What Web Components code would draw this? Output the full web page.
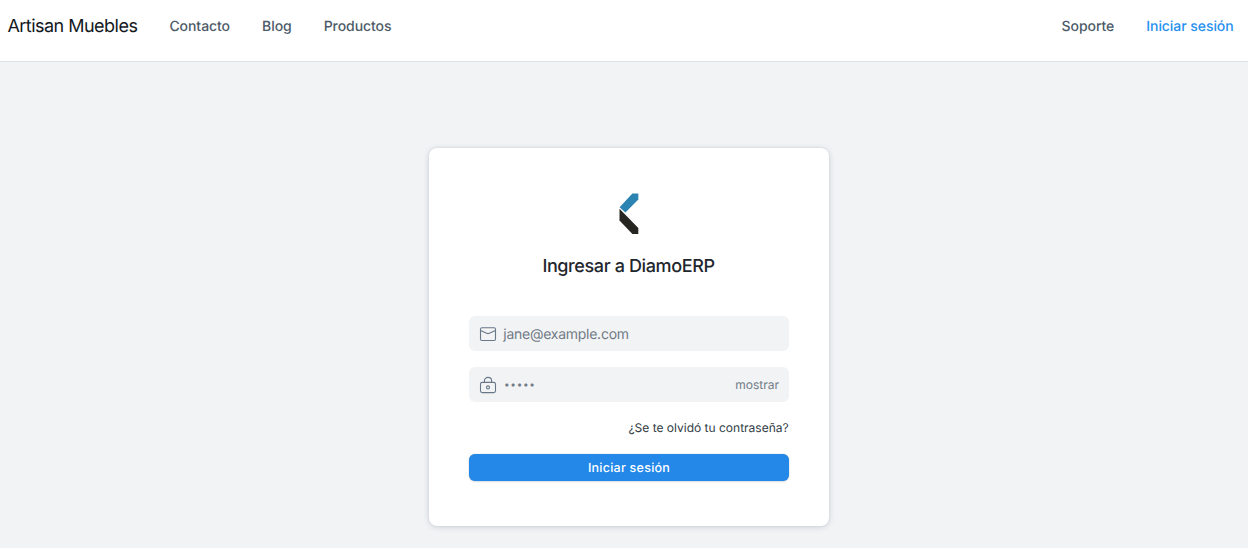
<!DOCTYPE html>
<html lang="es">
<head>
<meta charset="utf-8">
<title>Iniciar sesión</title>
<style>
html,body{margin:0;height:100%}
body{background:#f2f3f5;font-family:Inter,"Liberation Sans",sans-serif;color:#1f272e;overflow:hidden;text-rendering:geometricPrecision}
</style>
</head>
<body>
<site-navbar brand="Artisan Muebles">
  <nav-link>Contacto</nav-link><nav-link>Blog</nav-link><nav-link>Productos</nav-link>
  <nav-link slot="end">Soporte</nav-link><nav-link slot="end" active>Iniciar sesión</nav-link>
</site-navbar>
<login-card>
  <brand-logo slot="logo"></brand-logo>
  <span slot="title">Ingresar a DiamoERP</span>
  <form-field><field-icon slot="icon" name="mail"></field-icon>jane@example.com</form-field>
  <form-field kind="password"><field-icon slot="icon" name="lock"></field-icon>•••••<span slot="action">mostrar</span></form-field>
  <forgot-link>¿Se te olvidó tu contraseña?</forgot-link>
  <primary-button>Iniciar sesión</primary-button>
</login-card>
<script>
const define = (name, html, setup) => customElements.define(name, class extends HTMLElement {
  constructor() {
    super();
    this.attachShadow({mode: 'open'}).innerHTML = html;
  }
  connectedCallback() { if (setup) setup(this, this.shadowRoot); }
});

define('site-navbar', `<style>
:host{display:block;height:61px;background:#fff;border-bottom:1px solid #dfe2e5}
nav{display:flex;align-items:center;height:53px;padding:0 14.4px 0 7.4px;gap:32px}
.brand{font-size:18px;line-height:27px;letter-spacing:-.52px;color:#12181d;white-space:nowrap}
.group{display:flex;gap:32px}
.end{margin-left:auto}
</style><nav><span class="brand"></span><div class="group"><slot></slot></div><div class="group end"><slot name="end"></slot></div></nav>`,
(el, root) => { root.querySelector('.brand').textContent = el.getAttribute('brand'); });

define('nav-link', `<style>
:host{display:block;font-size:14px;font-weight:500;line-height:21px;letter-spacing:-.06px;color:#4c5a67;white-space:nowrap}
:host([active]){color:#2490ef}
</style><slot></slot>`);

define('login-card', `<style>
:host{display:flex;flex-direction:column;box-sizing:border-box;width:400px;height:378px;margin:86px 0 0 429px;padding:45px 40px;background:#fff;border-radius:8px;box-shadow:0 0 2px rgba(17,43,66,.1),0 1px 6px rgba(17,43,66,.16)}
header{display:flex;flex-direction:column;align-items:center;height:123px}
h4{margin:18px 0 0;font-size:18px;font-weight:500;line-height:27px;letter-spacing:-.38px;padding-right:1px;color:#1f272e;white-space:nowrap}
</style><header><slot name="logo"></slot><h4><slot name="title"></slot></h4></header><slot></slot>`);

define('brand-logo', `<style>:host{display:block;width:20px;height:42px}svg{display:block}</style>
<svg width="20" height="42" viewBox="0 0 20 42"><path fill="#2b83b1" d="M.6 14.2 13.4.5H19.3V6.6L6.4 19.6Z"/><path fill="#262522" d="M.5 15.7 19.3 35V41H13.4L.5 27.6Z"/></svg>`);

define('form-field', `<style>
:host{display:flex;align-items:center;box-sizing:border-box;height:35px;margin-bottom:16px;padding:0 10px;background:#f2f3f5;border-radius:6px;color:#717b85;font-size:14px;letter-spacing:-.26px;line-height:21px}
:host([kind=password]){margin-bottom:15px}
:host([kind=password]) .value{font-size:10px;letter-spacing:.7px;padding-left:.7px}
.value{margin-left:6.3px;flex:1;padding-top:2px}
.action{font-size:12px;letter-spacing:0}
</style><slot name="icon"></slot><span class="value"><slot></slot></span><span class="action"><slot name="action"></slot></span>`);

const icons = {
  mail: '<rect x="1.5" y="2.7" width="15" height="12.8" rx="1.5"/><path d="M1.5 5.5 7.7 8.3Q9 8.9 10.3 8.3L16.5 5.5"/>',
  lock: '<rect x="1.5" y="6.4" width="15" height="10.2" rx="1.8"/><path d="M5.4 6.4V4.7C5.4 2.7 7 1.4 9 1.4S12.6 2.7 12.6 4.7V6.4"/><circle cx="9" cy="11.4" r="1.5"/>'
};
define('field-icon', `<style>:host{display:block;width:18px;height:18px}svg{display:block;fill:none;stroke:#687888;stroke-width:1.1;stroke-linecap:round;stroke-linejoin:round}</style><svg width="18" height="18" viewBox="0 0 18 18"></svg>`,
(el, root) => { root.querySelector('svg').innerHTML = icons[el.getAttribute('name')]; });

define('forgot-link', `<style>:host{display:block;text-align:right;font-size:12px;line-height:21px;letter-spacing:0;padding-right:.4px;color:#313b44;margin-bottom:16px;white-space:nowrap}</style><slot></slot>`);

define('primary-button', `<style>
:host{display:block;box-sizing:border-box;height:27px;padding-top:1px;line-height:27px;border-radius:6px;background:#2388e8;color:#fff;font-size:12.5px;font-weight:500;letter-spacing:.25px;text-align:center;box-shadow:0 0 1px rgba(17,43,66,.4),0 1px 2px rgba(17,43,66,.12)}
</style><slot></slot>`);
</script>
</body>
</html>
